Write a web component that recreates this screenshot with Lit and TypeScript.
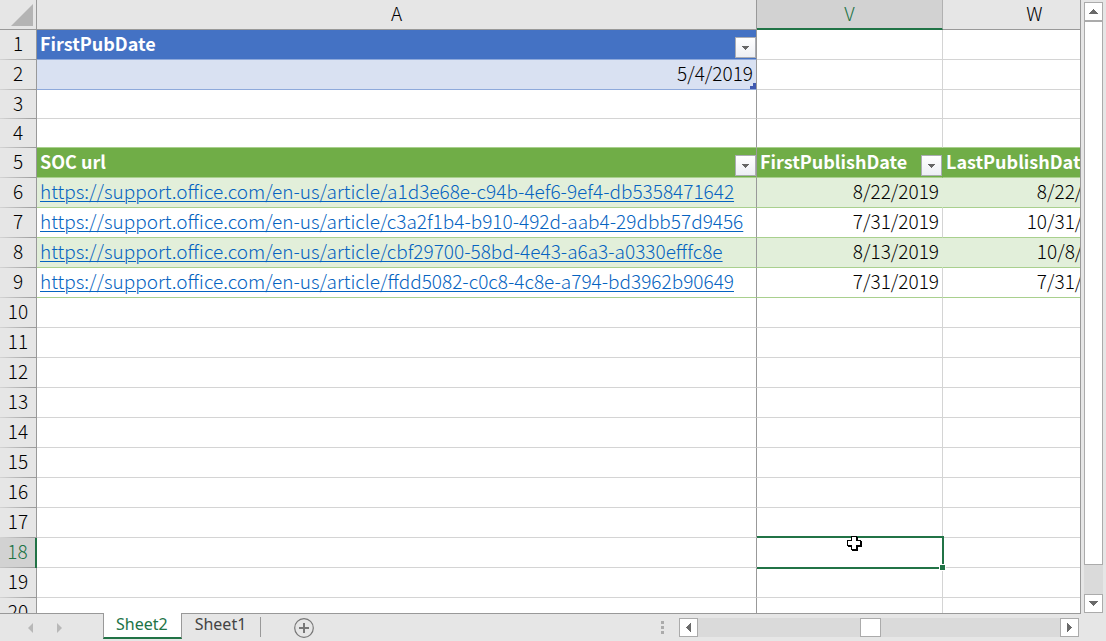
import { LitElement, html, css, nothing } from "lit";
import { customElement, state } from "lit/decorators.js";

interface Row {
  n: number;
  kind?: string;
  a?: string;
  v?: string;
  w?: string;
}

const BASE = "https://support.office.com/en-us/article/";

const ROWS: Row[] = [
  { n: 1, kind: "blue-head", a: "FirstPubDate" },
  { n: 2, kind: "blue-band", a: "5/4/2019" },
  { n: 3, kind: "short" },
  { n: 4, kind: "short above-table" },
  { n: 5, kind: "green-head", a: "SOC url", v: "FirstPublishDate", w: "LastPublishDate" },
  { n: 6, kind: "green band", a: BASE + "a1d3e68e-c94b-4ef6-9ef4-db5358471642", v: "8/22/2019", w: "8/22/2019" },
  { n: 7, kind: "green", a: BASE + "c3a2f1b4-b910-492d-aab4-29dbb57d9456", v: "7/31/2019", w: "10/31/2019" },
  { n: 8, kind: "green band", a: BASE + "cbf29700-58bd-4e43-a6a3-a0330efffc8e", v: "8/13/2019", w: "10/8/2019" },
  { n: 9, kind: "green", a: BASE + "ffdd5082-c0c8-4c8e-a794-bd3962b90649", v: "7/31/2019", w: "7/31/2019" },
  ...Array.from({ length: 11 }, (_, i) => ({ n: i + 10 })),
];

const ACTIVE_ROW = 18;

@customElement("sheet-grid")
export class SheetGrid extends LitElement {
  static styles = css`
    :host {
      display: block;
      overflow: hidden;
      background: #fff;
      border-right: 1px solid #999;
      border-bottom: 1px solid #999;
    }
    table {
      width: 100%;
      min-width: 1127px;
      table-layout: fixed;
      border-collapse: separate;
      border-spacing: 0;
      font: 300 19px/24px "Noto Sans CJK JP", "Noto Sans", sans-serif;
      color: #000;
    }
    .col-n { width: 37px; }
    .col-a { width: 720px; }
    .col-v { width: 186px; }
    th, td { box-sizing: border-box; padding: 0 0 4px; height: 30px; }
    .short th, .short td { height: 29px; }
    th { font-weight: 300; background: #e6e6e6; text-align: center; }
    thead th { border-bottom: 1px solid #999; border-right: 1px solid #b1b1b1; }
    thead .frozen { border-right-color: #999; }
    thead .active { padding-bottom: 2px; background: #d2d2d2; color: #217346; border-bottom: 2px solid #217346; }
    .corner { padding: 0; }
    .corner svg { display: block; margin-left: 11px; }
    tbody th {
      border-right: 1px solid #999;
      background:
        linear-gradient(90deg, #d4d4d4, #999) bottom / 100% 1px no-repeat,
        #e6e6e6;
    }
    tbody .active {
      color: #217346;
      background:
        linear-gradient(90deg, #c4c4c4, #999) bottom / 100% 1px no-repeat,
        #d2d2d2;
      border-right: 2px solid #217346;
    }
    td {
      border-right: 1px solid #d4d4d4;
      border-bottom: 1px solid #d4d4d4;
      white-space: nowrap;
      overflow: hidden;
    }
    .a { border-right-color: #999; }
    .date { text-align: right; padding-right: 3px; }
    .blue-head .a, .green-head td {
      padding: 0;
      vertical-align: top;
      font-weight: 700;
      font-size: 18px;
      line-height: 26px;
      color: #fff;
    }
    .blue-head .a { background: #4472c4; border-bottom-color: #8ea9db; }
    .blue-band .a { background: #d9e1f2; border-bottom-color: #8ea9db; position: relative; }
    .above-table td, .green td, .green-head td { border-bottom-color: #a9d08e; }
    .green-head td { background: #70ad47; }
    .green-head .v { border-right-color: #70ad47; }
    .band td { background: #e2efda; }
    .band .v { border-right-color: #e2efda; }
    .green .a, .green-head .a, .band .a { border-right-color: #999; }
    .head { display: flex; justify-content: space-between; align-items: flex-end; height: 28px; padding-left: 3px; }
    .head span { align-self: flex-start; }
    .filter {
      box-sizing: border-box;
      width: 21px;
      height: 21px;
      flex: none;
      padding: 0;
      display: grid;
      place-items: center;
      border: 1px solid #abadb3;
      background: linear-gradient(#fff, #edeff4);
    }
    a { color: #0563c1; padding-left: 3px; text-decoration: none; }
    a span { text-decoration: underline; text-underline-offset: 2px; text-decoration-thickness: 1px; }
    .mark { position: absolute; right: 0; bottom: 0; }
    td.selected { position: relative; overflow: visible; }
    .ring {
      position: absolute;
      inset: -2px -2px -2px 0;
      border: 2px solid #217346;
      border-left: 0;
    }
    .handle {
      position: absolute;
      right: -4px;
      bottom: -4px;
      width: 5px;
      height: 5px;
      border: 1px solid #fff;
      background: #217346;
    }
    .pointer { position: absolute; left: 90px; top: -2px; }
  `;

  private filter(name: string) {
    return html`<button class="filter" aria-label=${"Filter " + name}>
      <svg width="7" height="4" viewBox="0 0 7 4" shape-rendering="crispEdges">
        <path d="M0 0H7V1H6V2H5V3H4V4H3V3H2V2H1V1H0Z" fill="#666" />
      </svg>
    </button>`;
  }

  private heading(text: string) {
    return html`<div class="head"><span>${text}</span>${this.filter(text)}</div>`;
  }

  private cell(row: Row, col: "a" | "v" | "w") {
    const text = row[col];
    if (row.n === ACTIVE_ROW && col === "v") {
      return html`<td class="v selected">
        <div class="ring"><div class="handle"></div></div>
        <svg class="pointer" width="16" height="16" viewBox="0 0 16 16" shape-rendering="crispEdges">
          <path d="M5 1H11V5H15V11H11V15H5V11H1V5H5Z" fill="#000" />
          <path d="M4 0H10V4H14V10H10V14H4V10H0V4H4Z" fill="#000" />
          <path d="M5 1H9V5H13V9H9V13H5V9H1V5H5Z" fill="#fff" />
        </svg>
      </td>`;
    }
    if (!text) return html`<td class=${col}></td>`;
    if (row.kind?.includes("head")) return html`<td class=${col}>${this.heading(text)}</td>`;
    if (text.startsWith("https")) return html`<td class=${col}><a href=${text}><span>${text}</span></a></td>`;
    return html`<td class="${col} date">${text}${row.kind === "blue-band"
      ? html`<svg class="mark" width="6" height="6" viewBox="0 0 6 6" shape-rendering="crispEdges">
          <path d="M3 0H6V6H0V3H3Z" fill="#4059b0" />
        </svg>`
      : nothing}</td>`;
  }

  render() {
    return html`<table>
      <colgroup><col class="col-n" /><col class="col-a" /><col class="col-v" /><col /></colgroup>
      <thead>
        <tr>
          <th class="corner frozen" aria-label="Select all">
            <svg width="22" height="22" viewBox="0 0 22 22"><path d="M22 0V22H0Z" fill="#b4b4b4" /></svg>
          </th>
          <th class="frozen" scope="col">A</th>
          <th class="active" scope="col">V</th>
          <th scope="col">W</th>
        </tr>
      </thead>
      <tbody>
        ${ROWS.map(
          (r) => html`<tr class=${r.kind ?? ""}>
            <th scope="row" class=${r.n === ACTIVE_ROW ? "active" : ""}>${r.n}</th>
            ${this.cell(r, "a")}${this.cell(r, "v")}${this.cell(r, "w")}
          </tr>`
        )}
      </tbody>
    </table>`;
  }
}

@customElement("scroll-bar")
export class ScrollBar extends LitElement {
  static properties = { vertical: { type: Boolean, reflect: true } };
  declare vertical: boolean;

  static styles = css`
    :host { display: flex; background: #dadada; }
    :host([vertical]) { flex-direction: column; }
    button, .thumb {
      box-sizing: border-box;
      width: 19px;
      height: 19px;
      flex: none;
      padding: 0;
      display: grid;
      place-items: center;
      background: #fff;
      border: 1px solid #ababab;
    }
    .track { flex: 1; display: flex; min-width: 0; min-height: 0; }
    :host([vertical]) .track { flex-direction: column; }
    .before { flex: 162; }
    .thumb { width: 21px; }
    .after { flex: 180; }
    :host([vertical]) .before { flex: 0; }
    :host([vertical]) .thumb { width: 19px; height: auto; flex: 544; }
    :host([vertical]) .after { flex: 29; }
  `;

  private arrow(d: string, label: string) {
    return html`<button aria-label=${label}>
      <svg width="9" height="9" viewBox="0 0 9 9" shape-rendering="crispEdges"><path d=${d} fill="#6a6a6a" /></svg>
    </button>`;
  }

  render() {
    const back = this.vertical ? "M4 2H5V3H6V4H7V5H8V6H9V7H0V6H1V5H2V4H3V3H4Z" : "M7 0V9H6V8H5V7H4V6H3V5H2V4H3V3H4V2H5V1H6V0Z";
    const next = this.vertical ? "M0 2H9V3H8V4H7V5H6V6H5V7H4V6H3V5H2V4H1V3H0Z" : "M2 0H3V1H4V2H5V3H6V4H7V5H6V6H5V7H4V8H3V9H2Z";
    return html`${this.arrow(back, this.vertical ? "Up" : "Left")}
      <div class="track"><div class="before"></div><div class="thumb"></div><div class="after"></div></div>
      ${this.arrow(next, this.vertical ? "Down" : "Right")}`;
  }
}

@customElement("app-root")
export class AppRoot extends LitElement {
  @state() private current = "Sheet2";

  static styles = css`
    :host {
      display: grid;
      grid-template: minmax(0, 1fr) 27px / minmax(0, 1fr) 25px;
      height: 100vh;
      overflow: hidden;
      background: #e6e6e6;
    }
    .side { padding: 2px 3px 1px; display: flex; }
    .side scroll-bar { flex: 1; }
    .bar { grid-column: 1 / -1; display: flex; align-items: flex-start; padding-right: 27px; }
    .nav { box-sizing: border-box; width: 103px; height: 28px; display: flex; gap: 22px; align-items: center; padding-left: 27px; }
    .nav button, .add { border: 0; padding: 0; background: none; display: block; }
    .nav svg, .add svg { display: block; }
    .tab {
      box-sizing: border-box;
      margin-top: -1px;
      height: 26px;
      padding: 0 13px 2px 12px;
      border: solid transparent;
      border-width: 0 1px 2px;
      background: none;
      font: 400 16px/20px "Noto Sans", sans-serif;
      color: #444;
    }
    .tab.on {
      color: #217346;
      background: #fff;
      border-color: #999;
      border-bottom-color: #217346;
    }
    .line { width: 1px; height: 20px; margin: 3px 33px 0 0; background: #999; }
    .add { margin-top: 4px; }
    .grip { margin: 7px 15px 0 auto; display: grid; gap: 2px; }
    .grip i { width: 3px; height: 3px; background: #ababab; }
    .bottom { flex: 0 1 400px; margin-top: 4px; }
  `;

  render() {
    return html`
      <sheet-grid></sheet-grid>
      <div class="side"><scroll-bar vertical></scroll-bar></div>
      <div class="bar">
        <div class="nav">
          <button aria-label="Previous sheet"><svg width="7" height="10" viewBox="0 0 7 10"><path d="M6 0V10L1 5Z" fill="#b8b8b8" /></svg></button>
          <button aria-label="Next sheet"><svg width="7" height="10" viewBox="0 0 7 10"><path d="M1 0V10L6 5Z" fill="#b8b8b8" /></svg></button>
        </div>
        ${["Sheet2", "Sheet1"].map(
          (s) => html`<button class="tab ${s === this.current ? "on" : ""}" @click=${() => (this.current = s)}>${s}</button>`
        )}
        <div class="line"></div>
        <button class="add" aria-label="New sheet">
          <svg width="20" height="20" viewBox="0 0 20 20" fill="none" stroke="#777">
            <circle cx="10" cy="10" r="9.3" stroke-width="1.2" />
            <path d="M10 5V15M5 10H15" stroke-width="2" />
          </svg>
        </button>
        <div class="grip"><i></i><i></i><i></i></div>
        <scroll-bar class="bottom"></scroll-bar>
      </div>
    `;
  }
}
